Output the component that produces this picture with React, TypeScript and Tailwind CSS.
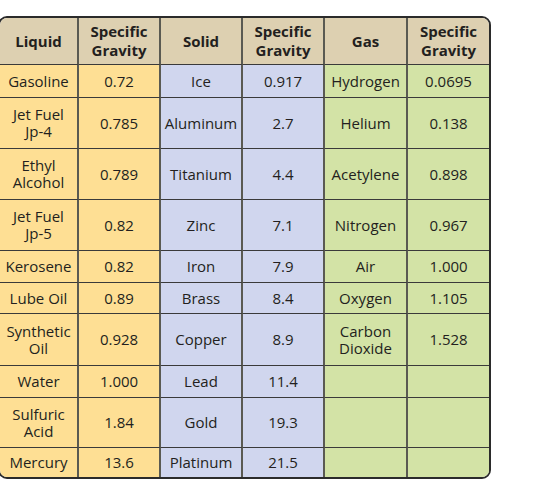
import React from 'react';

type Cell = string;

const colWidths = 'grid-cols-[79px_82px_82px_82px_83px_81px]';
const rowHeights = 'grid-rows-[47px_33px_51px_51px_51px_32px_31px_52px_32px_50px_29px]';

const header: Cell[] = ['Liquid', 'Specific\nGravity', 'Solid', 'Specific\nGravity', 'Gas', 'Specific\nGravity'];

const rows: Cell[][] = [
  ['Gasoline', '0.72', 'Ice', '0.917', 'Hydrogen', '0.0695'],
  ['Jet Fuel\nJp-4', '0.785', 'Aluminum', '2.7', 'Helium', '0.138'],
  ['Ethyl\nAlcohol', '0.789', 'Titanium', '4.4', 'Acetylene', '0.898'],
  ['Jet Fuel\nJp-5', '0.82', 'Zinc', '7.1', 'Nitrogen', '0.967'],
  ['Kerosene', '0.82', 'Iron', '7.9', 'Air', '1.000'],
  ['Lube Oil', '0.89', 'Brass', '8.4', 'Oxygen', '1.105'],
  ['Synthetic\nOil', '0.928', 'Copper', '8.9', 'Carbon\nDioxide', '1.528'],
  ['Water', '1.000', 'Lead', '11.4', '', ''],
  ['Sulfuric\nAcid', '1.84', 'Gold', '19.3', '', ''],
  ['Mercury', '13.6', 'Platinum', '21.5', '', ''],
];

const bodyBg = ['bg-[#fedf94]', 'bg-[#fedf94]', 'bg-[#d0d6ee]', 'bg-[#d0d6ee]', 'bg-[#d3e3a6]', 'bg-[#d3e3a6]'];

export default function App() {
  const lastRow = rows.length - 1;
  return (
    <div className="w-[545px] h-[488px] bg-white pt-[16px] font-['Open_Sans',sans-serif] text-[#231f20]">
      <div className="ml-[-2px] w-[493px] border-2 border-[#2b2b2b] rounded-[9px] overflow-hidden">
        <div className={`grid ${colWidths} ${rowHeights}`}>
          {header.map((h, i) => (
            <div
              key={'h' + i}
              className={`bg-[#ddd0b1] flex items-center justify-center text-center whitespace-pre-line font-bold text-[15px] leading-[19px] border-b border-b-[#3a3a3a] ${
                i < 5 ? 'border-r-2 border-r-[#5a5a52]' : ''
              }`}
            >
              {h}
            </div>
          ))}
          {rows.map((row, r) =>
            row.map((c, i) => (
              <div
                key={r + '-' + i}
                className={`${bodyBg[i]} flex items-center justify-center text-center whitespace-pre-line text-[15px] leading-[17px] ${
                  r < lastRow ? 'border-b border-b-[#3a3a3a]' : ''
                } ${i < 5 ? 'border-r-2 border-r-[#5a5a52]' : ''}`}
              >
                {c}
              </div>
            ))
          )}
        </div>
      </div>
    </div>
  );
}
